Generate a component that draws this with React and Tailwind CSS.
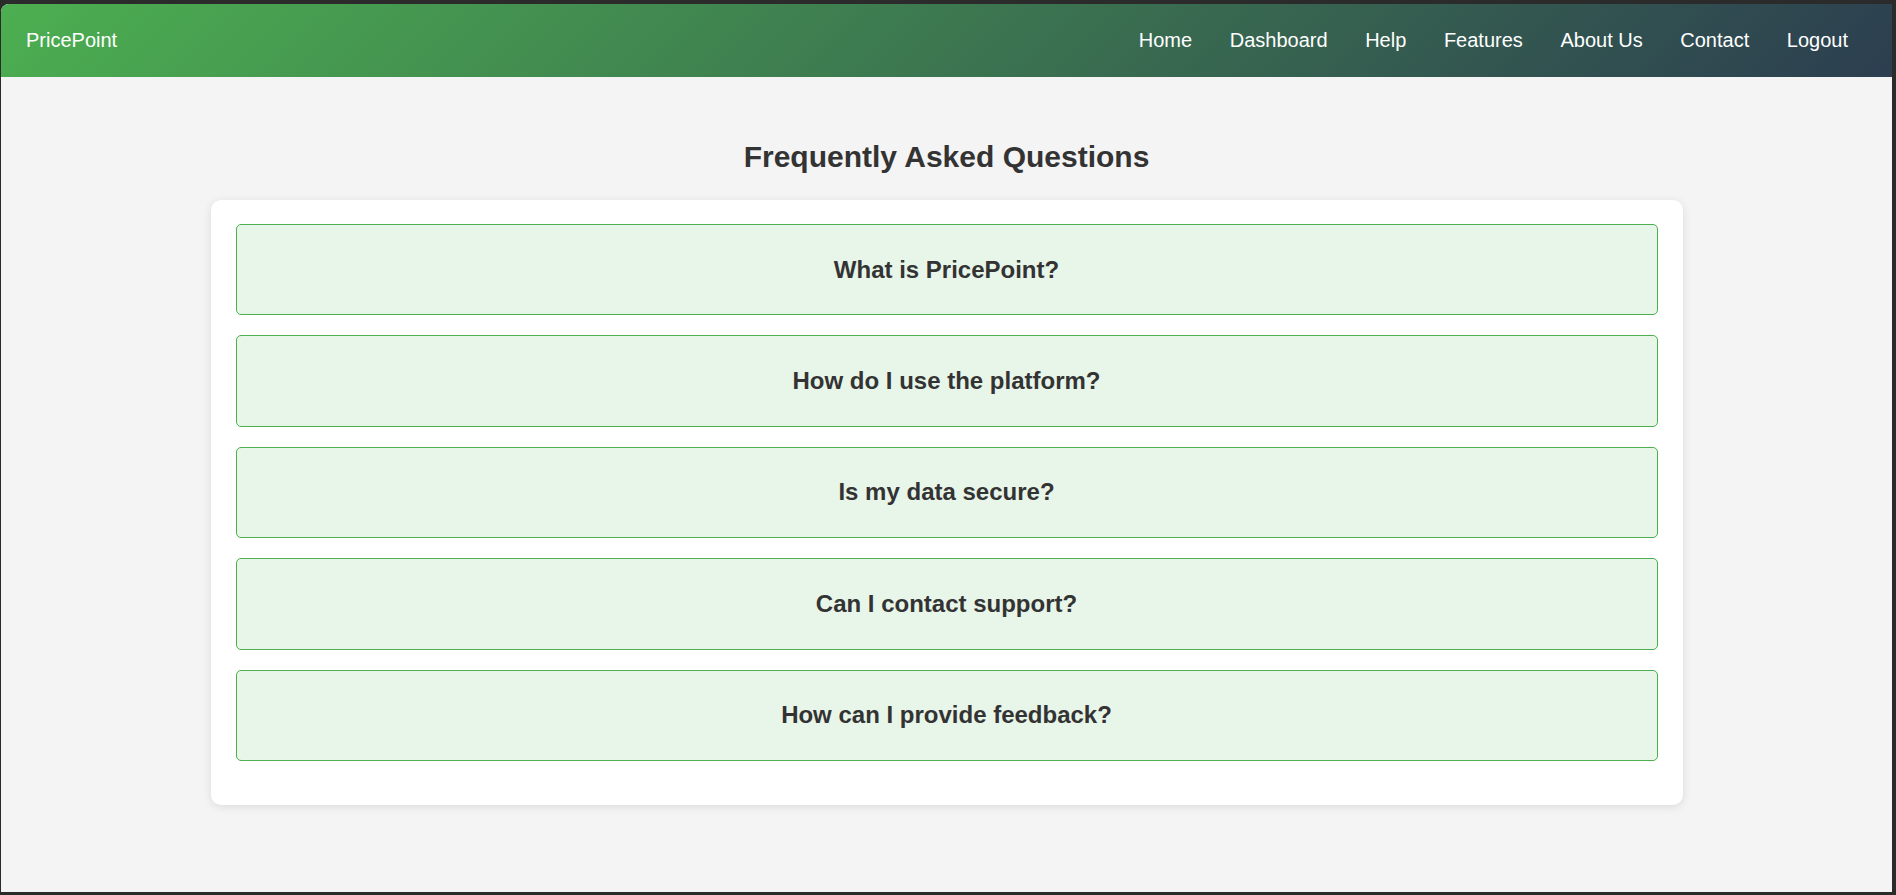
import React from 'react';

const links = ['Home', 'Dashboard', 'Help', 'Features', 'About Us', 'Contact', 'Logout'];

const faqs = [
  'What is PricePoint?',
  'How do I use the platform?',
  'Is my data secure?',
  'Can I contact support?',
  'How can I provide feedback?',
];

export default function App() {
  return (
    <div className="h-[895px] bg-[#2b2b2b] pt-[4px] pl-[1px] pr-[4px] pb-[3px] font-['Liberation_Sans',Arial,sans-serif]">
      <div className="h-full bg-[#f4f4f4] rounded-tl-[8px] overflow-hidden flex flex-col">
        {/* Navbar */}
        <nav className="h-[73px] shrink-0 flex items-center justify-between pl-[25px] pr-[44px] pb-[2px] bg-[linear-gradient(135deg,#4caf50,#2c3e50)]">
          <div className="text-white text-[20px]">PricePoint</div>
          <ul className="flex items-center gap-[37.6px]">
            {links.map((l) => (
              <li key={l}>
                <a href="#" className="text-white text-[20px]">{l}</a>
              </li>
            ))}
          </ul>
        </nav>

        {/* FAQ */}
        <main className="pt-[62px]">
          <h2 className="text-center text-[30px] leading-[36px] font-bold text-[#333]">Frequently Asked Questions</h2>
          <div className="w-[1472px] mx-auto mt-[25px] bg-white rounded-[10px] shadow-[0_2px_10px_rgba(0,0,0,0.1)] pt-[24px] pb-[24px] px-[25px]">
            {faqs.map((q) => (
              <div
                key={q}
                className="h-[91.4px] mb-[20px] flex items-center justify-center bg-[#e8f5e9] border border-[#4caf50] rounded-[5px]"
              >
                <span className="text-[24px] font-bold text-[#333]">{q}</span>
              </div>
            ))}
          </div>
        </main>
      </div>
    </div>
  );
}
